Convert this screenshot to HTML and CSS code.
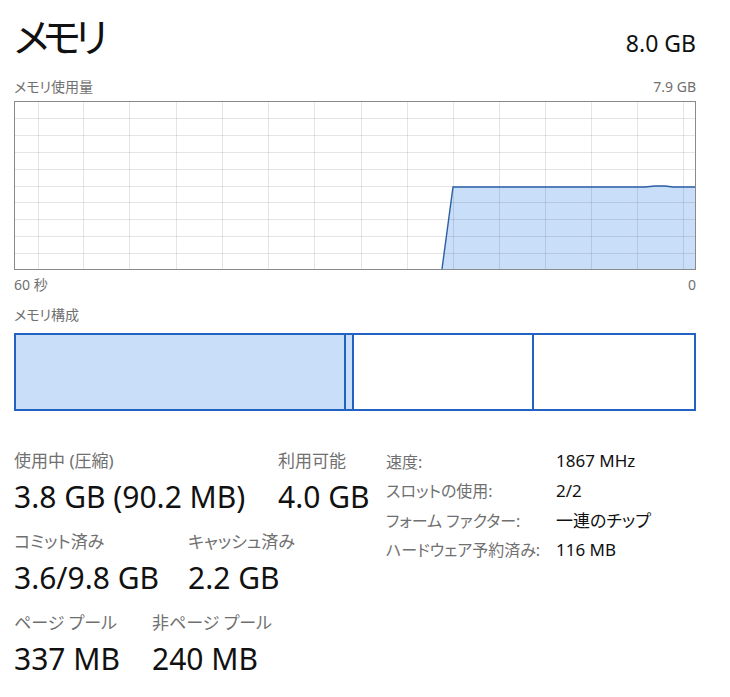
FILE: index.html
```html
<!DOCTYPE html>
<html lang="ja">
<head>
<meta charset="utf-8">
<title>メモリ</title>
<link rel="stylesheet" href="styles.css">
</head>
<body>
<main class="panel">
  <header class="head">
    <h1 class="title">メモリ</h1>
    <div class="total">8.0 GB</div>
  </header>

  <div class="row-labels graph-top">
    <span>メモリ使用量</span>
    <span>7.9 GB</span>
  </div>
  <div class="graph">
    <svg width="680" height="167" viewBox="0 0 680 167">
      <polygon class="area" points="427,167 438,85 630,85 640,84 650,84 658,85 680,85 680,167"/>
      <g class="grid">
        <line x1="23.5" y1="0" x2="23.5" y2="167"/>
        <line x1="68.5" y1="0" x2="68.5" y2="167"/>
        <line x1="114.5" y1="0" x2="114.5" y2="167"/>
        <line x1="161.5" y1="0" x2="161.5" y2="167"/>
        <line x1="207.5" y1="0" x2="207.5" y2="167"/>
        <line x1="253.5" y1="0" x2="253.5" y2="167"/>
        <line x1="299.5" y1="0" x2="299.5" y2="167"/>
        <line x1="346.5" y1="0" x2="346.5" y2="167"/>
        <line x1="392.5" y1="0" x2="392.5" y2="167"/>
        <line x1="438.5" y1="0" x2="438.5" y2="167"/>
        <line x1="484.5" y1="0" x2="484.5" y2="167"/>
        <line x1="530.5" y1="0" x2="530.5" y2="167"/>
        <line x1="576.5" y1="0" x2="576.5" y2="167"/>
        <line x1="622.5" y1="0" x2="622.5" y2="167"/>
        <line x1="668.5" y1="0" x2="668.5" y2="167"/>
        <line x1="0" y1="16.5" x2="680" y2="16.5"/>
        <line x1="0" y1="33.5" x2="680" y2="33.5"/>
        <line x1="0" y1="50.5" x2="680" y2="50.5"/>
        <line x1="0" y1="67.5" x2="680" y2="67.5"/>
        <line x1="0" y1="84.5" x2="680" y2="84.5"/>
        <line x1="0" y1="100.5" x2="680" y2="100.5"/>
        <line x1="0" y1="117.5" x2="680" y2="117.5"/>
        <line x1="0" y1="134.5" x2="680" y2="134.5"/>
        <line x1="0" y1="151.5" x2="680" y2="151.5"/>
      </g>
      <polyline class="line" points="427,167 438,85 630,85 640,84 650,84 658,85 680,85"/>
    </svg>
  </div>
  <div class="row-labels axis">
    <span>60 秒</span>
    <span>0</span>
  </div>

  <div class="section-label">メモリ構成</div>
  <div class="compo">
    <div class="seg seg-used"></div>
    <div class="seg seg-mod"></div>
    <div class="seg seg-standby"></div>
    <div class="seg seg-free"></div>
  </div>

  <section class="stats">
    <div class="left">
      <div class="srow">
        <div class="stat w1">
          <div class="slabel">使用中 (圧縮)</div>
          <div class="sval">3.8 GB (90.2 MB)</div>
        </div>
        <div class="stat">
          <div class="slabel">利用可能</div>
          <div class="sval">4.0 GB</div>
        </div>
      </div>
      <div class="srow">
        <div class="stat w2">
          <div class="slabel">コミット済み</div>
          <div class="sval">3.6/9.8 GB</div>
        </div>
        <div class="stat">
          <div class="slabel">キャッシュ済み</div>
          <div class="sval">2.2 GB</div>
        </div>
      </div>
      <div class="srow">
        <div class="stat w3">
          <div class="slabel">ページ プール</div>
          <div class="sval">337 MB</div>
        </div>
        <div class="stat">
          <div class="slabel">非ページ プール</div>
          <div class="sval">240 MB</div>
        </div>
      </div>
    </div>
    <dl class="props">
      <dt>速度:</dt><dd>1867 MHz</dd>
      <dt>スロットの使用:</dt><dd>2/2</dd>
      <dt>フォーム ファクター:</dt><dd>一連のチップ</dd>
      <dt>ハードウェア予約済み:</dt><dd>116 MB</dd>
    </dl>
  </section>
</main>
</body>
</html>
```

FILE: styles.css
```css
html, body {
  margin: 0;
  padding: 0;
  background: #ffffff;
}
body {
  font-family: "Noto Sans", "Noto Sans CJK JP", sans-serif;
  font-feature-settings: "palt";
  color: #111;
}
.panel {
  width: 682px;
  padding: 13px 0 0 14px;
}
.head {
  display: flex;
  justify-content: space-between;
  align-items: baseline;
  height: 48px;
}
.title {
  margin: 0;
  font-size: 40px;
  font-weight: 400;
  line-height: 48px;
  letter-spacing: -6px;
}
.total {
  font-size: 23px;
  line-height: 30px;
}
.row-labels {
  display: flex;
  justify-content: space-between;
  font-size: 14px;
  line-height: 20px;
  color: #707070;
}
.graph-top {
  margin-top: 16px;
  margin-bottom: 4px;
}
.graph {
  border: 1px solid #8a8a8a;
  height: 167px;
  width: 680px;
}
.graph svg {
  display: block;
}
.grid line {
  stroke: rgba(0, 0, 0, 0.1);
  stroke-width: 1;
}
.area {
  fill: #c9def8;
}
.line {
  fill: none;
  stroke: #2a5fa6;
  stroke-width: 1.4;
}
.axis {
  margin-top: 5px;
}
.section-label {
  margin-top: 10px;
  font-size: 14px;
  line-height: 20px;
  color: #707070;
}
.compo {
  margin-top: 8px;
  height: 74px;
  border: 2px solid #2262c2;
  display: flex;
}
.seg {
  border-right: 2px solid #2262c2;
}
.seg-used {
  width: 328px;
  background: #c9def8;
}
.seg-mod {
  width: 6px;
  background: #c9def8;
}
.seg-standby {
  width: 178px;
}
.seg-free {
  flex: 1;
  border-right: none;
}
.stats {
  display: flex;
  margin-top: 35px;
}
.left {
  width: 372px;
  padding-top: 4px;
}
.srow {
  display: flex;
  margin-bottom: 16px;
}
.w1 { width: 264px; }
.w2 { width: 174px; }
.w3 { width: 138px; }
.slabel {
  font-size: 17px;
  line-height: 22px;
  color: #707070;
  white-space: nowrap;
}
.sval {
  margin-top: 7px;
  font-size: 30px;
  line-height: 36px;
  color: #111;
  white-space: nowrap;
}
.props {
  margin: 0;
  display: grid;
  grid-template-columns: 170px auto;
  grid-auto-rows: 29.5px;
  align-items: center;
}
.props dt {
  font-size: 16px;
  color: #707070;
  white-space: nowrap;
}
.props dd {
  margin: 0;
  font-size: 17px;
  color: #111;
  white-space: nowrap;
}
```
